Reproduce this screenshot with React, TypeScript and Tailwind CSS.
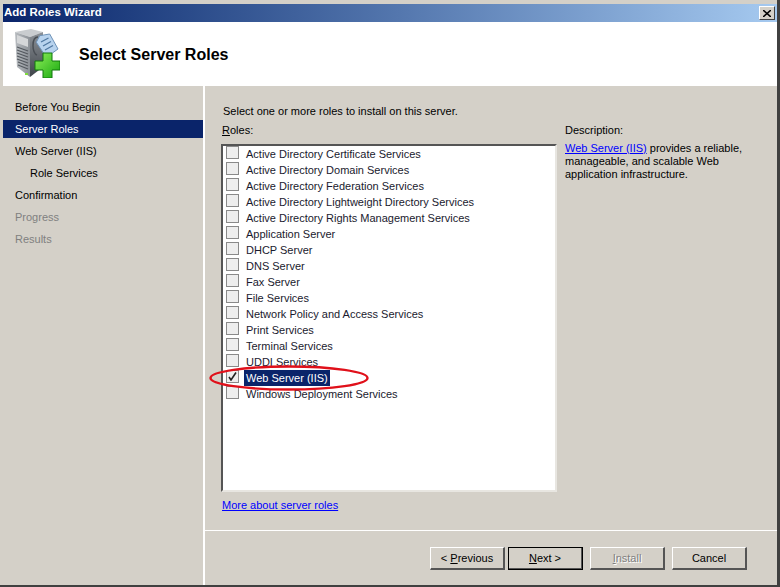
import React from "react";

const roles = [
  "Active Directory Certificate Services",
  "Active Directory Domain Services",
  "Active Directory Federation Services",
  "Active Directory Lightweight Directory Services",
  "Active Directory Rights Management Services",
  "Application Server",
  "DHCP Server",
  "DNS Server",
  "Fax Server",
  "File Services",
  "Network Policy and Access Services",
  "Print Services",
  "Terminal Services",
  "UDDI Services",
  "Web Server (IIS)",
  "Windows Deployment Services",
];

const navItems = [
  { label: "Before You Begin", indent: false, state: "normal" },
  { label: "Server Roles", indent: false, state: "active" },
  { label: "Web Server (IIS)", indent: false, state: "normal" },
  { label: "Role Services", indent: true, state: "normal" },
  { label: "Confirmation", indent: false, state: "normal" },
  { label: "Progress", indent: false, state: "disabled" },
  { label: "Results", indent: false, state: "disabled" },
];

const ServerIcon = () => (
  <svg className="mb-[2px] shrink-0" width="46" height="50" viewBox="0 0 46 50">
    <defs>
      <linearGradient id="front" x1="0" y1="0" x2="1" y2="0">
        <stop offset="0" stopColor="#b8bcc0" />
        <stop offset="1" stopColor="#8b9096" />
      </linearGradient>
      <linearGradient id="side" x1="0" y1="0" x2="0" y2="1">
        <stop offset="0" stopColor="#8d9298" />
        <stop offset="1" stopColor="#3f444a" />
      </linearGradient>
      <linearGradient id="plus" x1="0" y1="0" x2="1" y2="1">
        <stop offset="0" stopColor="#8fef5a" />
        <stop offset="1" stopColor="#17a80f" />
      </linearGradient>
    </defs>
    <path d="M1 4 L17 1 L29 4 L16 9 Z" fill="#c9cccf" />
    <path d="M1 4 L16 9 L16 49 L3 39 Z" fill="url(#front)" />
    <path d="M16 9 L29 4 L29 39 L16 49 Z" fill="url(#side)" />
    <path d="M3 7 L14 11 V19 L3 15 Z" fill="#d5d7d9" />
    <path d="M3 19 L14 23 M3 22 L14 26 M3 25 L14 29 M3 28 L14 32 M3 31 L14 35 M4 34 L14 38 M4 37 L14 41" stroke="#54595f" strokeWidth="1.3" />
    <rect x="11" y="45" width="3" height="2" fill="#7ddb3a" />
    <path d="M24 9 C 17 9 18 26 23 27" fill="none" stroke="#4a4f55" strokeWidth="1.5" />
    <path d="M25.7 7.7 L35.7 6 L44 21 L32.3 29.3 L22.3 14.3 Z" fill="#b8d3ee" stroke="#6f93b8" />
    <path d="M27 14 L34.5 10 M29 18 L37 13.5 M31 22 L39 17.5" stroke="#4f77a0" strokeWidth="1.3" />
    <path d="M29 25 H38 V33 H46 V42 H38 V50 H29 V42 H21 V33 H29 Z" fill="url(#plus)" stroke="#11780c" />
  </svg>
);

const Checkbox = ({ checked }: { checked?: boolean }) => (
  <span className="w-[13px] h-[13px] shrink-0 border border-[#8a8a8a] bg-[#eeeeee] flex items-center justify-center">
    {checked && (
      <svg width="9" height="9" viewBox="0 0 9 9">
        <path d="M1 5 L3 8 L8 0.5" fill="none" stroke="#222" strokeWidth="1.6" />
      </svg>
    )}
  </span>
);

const WizardButton = ({ children, isDefault, disabled }: { children: React.ReactNode; isDefault?: boolean; disabled?: boolean }) => (
  <button
    className={
      "w-[75px] h-[23px] pt-px bg-[#d4d0c8] text-[11px] border-t border-l border-t-white border-l-white border-b-2 border-r-2 border-b-[#555] border-r-[#555] " +
      (isDefault ? "outline outline-1 outline-black -outline-offset-1 " : "") +
      (disabled ? "text-[#808080] [text-shadow:1px_1px_0_#fff]" : "text-black")
    }
  >
    {children}
  </button>
);

export default function App() {
  return (
    <div
      className="w-[780px] h-[587px] bg-[#d4d0c8] flex flex-col pt-1 pl-[3px] border-r-[3px] border-r-[#404040] border-b-2 border-b-[#404040] text-[11px] text-black overflow-hidden relative"
      style={{ fontFamily: '"Liberation Sans", Tahoma, sans-serif' }}
    >
      <div className="h-[18px] shrink-0 flex items-center justify-between pl-px pr-[2px] bg-gradient-to-r from-[#0a246a] to-[#a6caf0]">
        <span className="text-white font-bold text-[11.5px] leading-none">Add Roles Wizard</span>
        <span className="w-4 h-[14px] bg-[#d4d0c8] border-t border-l border-t-white border-l-white border-b border-r border-b-[#404040] border-r-[#404040] flex items-center justify-center">
          <svg width="8" height="7" viewBox="0 0 8 7">
            <path d="M0 0 L8 7 M8 0 L0 7" stroke="#000" strokeWidth="1.6" />
          </svg>
        </span>
      </div>

      <div className="h-[64px] shrink-0 bg-white flex items-center pl-[11px]">
        <ServerIcon />
        <h1 className="ml-[19px] mt-px font-bold text-[16px] text-black">Select Server Roles</h1>
      </div>

      <div className="flex-1 flex min-h-0">
        <nav className="w-[202px] shrink-0 border-r-2 border-r-white pt-3">
          {navItems.map((item) => (
            <div
              key={item.label}
              className={
                "h-[18px] mb-1 pt-px flex items-center " +
                (item.indent ? "pl-[27px] " : "pl-3 ") +
                (item.state === "active" ? "bg-[#0a246a] text-white " : "") +
                (item.state === "disabled" ? "text-[#808080]" : "")
              }
            >
              {item.label}
            </div>
          ))}
        </nav>

        <div className="flex-1 flex flex-col">
          <div className="h-[445px] border-b border-b-white pl-[16px] pt-[17px] relative">
            <p className="pl-[2px] leading-[16px]">Select one or more roles to install on this server.</p>
            <div className="flex mt-[3px]">
              <div className="w-[336px]">
                <div className="pl-px leading-[16px]">
                  <u>R</u>oles:
                </div>
                <div className="h-[348px] mt-[6px] bg-white border-2 border-t-[#555] border-l-[#555] border-r-[#e8e6e1] border-b-[#e8e6e1] pl-[3px]">
                  {roles.map((r) => {
                    const on = r === "Web Server (IIS)";
                    return (
                      <div key={r} className="h-4 flex items-start">
                        <Checkbox checked={on} />
                        <span className={"ml-[5px] px-[2px] leading-[16px] " + (on ? "bg-[#0a246a] text-white" : "text-[#1a1a2e]")}>{r}</span>
                      </div>
                    );
                  })}
                </div>
              </div>
              <div className="ml-[8px] w-[195px]">
                <div className="leading-[16px]">Description:</div>
                <p className="leading-[13px] mt-[4px]">
                  <a className="text-[#0000ff] underline">Web Server (IIS)</a> provides a reliable, manageable, and scalable Web application infrastructure.
                </p>
              </div>
            </div>
            <a className="block mt-[5px] pl-px text-[#0000ff] underline leading-[16px]">More about server roles</a>
          </div>

          <div className="flex-1 flex items-start pt-[16px] pl-[225px] gap-[3px]">
            <WizardButton>
              &lt; <u>P</u>revious
            </WizardButton>
            <WizardButton isDefault>
              <u>N</u>ext &gt;
            </WizardButton>
            <span className="w-px" />
            <WizardButton disabled>
              <u>I</u>nstall
            </WizardButton>
            <span className="w-px" />
            <WizardButton>Cancel</WizardButton>
          </div>
        </div>
      </div>

      <svg className="absolute left-[209px] top-[364px]" width="161" height="28" viewBox="0 0 161 28">
        <ellipse cx="80" cy="14" rx="78.5" ry="11.5" fill="none" stroke="#e0101a" strokeWidth="2.4" />
      </svg>
    </div>
  );
}
